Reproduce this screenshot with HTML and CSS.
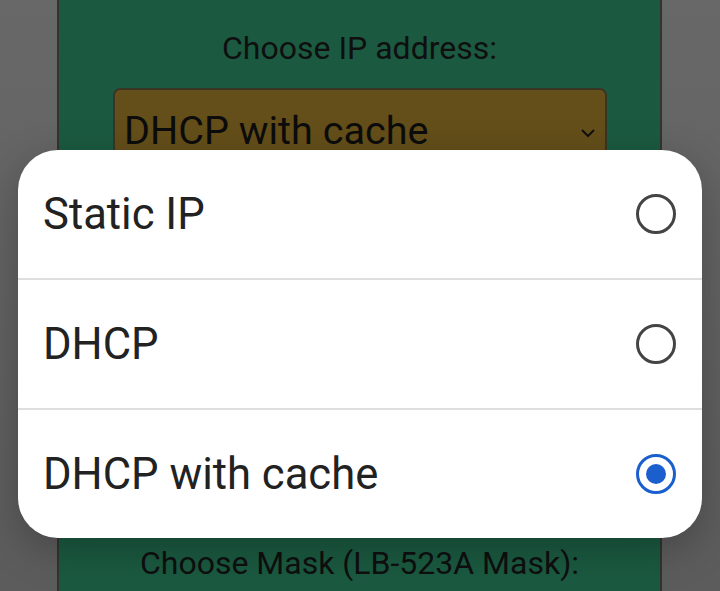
FILE: index.html
```html
<!DOCTYPE html>
<html lang="en">
<head>
    <meta charset="UTF-8">
    <meta name="viewport" content="width=device-width, initial-scale=1.0">
    <title>Network settings</title>
    <link rel="stylesheet" href="styles.css">
</head>
<body>
    <div class="panel">
        <p class="label">Choose IP address:</p>
        <div class="select">
            <span>DHCP with cache</span>
            <svg class="chevron" width="16" height="10" viewBox="0 0 16 10"><path d="M2 2l6 6 6-6" fill="none" stroke="#111" stroke-width="2"/></svg>
        </div>
        <p class="label mask-label">Choose Mask (LB-523A Mask):</p>
    </div>

    <div class="dialog">
        <div class="option">
            <span>Static IP</span>
            <span class="radio"></span>
        </div>
        <div class="option">
            <span>DHCP</span>
            <span class="radio"></span>
        </div>
        <div class="option">
            <span>DHCP with cache</span>
            <span class="radio checked"></span>
        </div>
    </div>
</body>
</html>
```

FILE: styles.css
```css
html, body {
    height: 100%;
}
body {
    font-family: Roboto, "Noto Sans", "Liberation Sans", sans-serif;
    margin: 0;
    background: linear-gradient(#686868, #5c5c5c);
    overflow: hidden;
}
.panel {
    width: 605px;
    height: 100%;
    margin: 0 auto 0 57px;
    background-color: #1b5a41;
    border-left: 2px solid #333;
    border-right: 2px solid #333;
    padding-top: 29px;
    box-sizing: border-box;
    text-align: center;
}
.label {
    margin: 0;
    font-size: 32px;
    color: #0f0f0f;
}
.select {
    margin: 21px 0 0 54px;
    width: 494px;
    height: 72px;
    box-sizing: border-box;
    background-color: #644f1a;
    border: 2px solid #3a3424;
    border-radius: 7px;
    display: flex;
    justify-content: space-between;
    padding: 17px 9px 0 9px;
    font-size: 39.6px;
    color: #0c0c0c;
    text-align: left;
}
.chevron {
    margin-top: 21px;
}
.mask-label {
    margin-top: 384px;
}
.dialog {
    position: absolute;
    left: 18px;
    top: 150px;
    width: 684px;
    background: white;
    border-radius: 40px;
    box-shadow: 0 12px 40px rgba(0,0,0,0.25);
    overflow: hidden;
}
.option {
    height: 128px;
    display: flex;
    align-items: center;
    justify-content: space-between;
    padding: 0 26px 0 25px;
    font-size: 43.6px;
    color: #222;
}
.option + .option {
    border-top: 2px solid #dedede;
}
.radio {
    width: 40px;
    height: 40px;
    box-sizing: border-box;
    border: 3.5px solid #444;
    border-radius: 50%;
    display: flex;
    align-items: center;
    justify-content: center;
}
.radio.checked {
    border-color: #1b5fcf;
}
.radio.checked::after {
    content: "";
    width: 20px;
    height: 20px;
    border-radius: 50%;
    background: #1b5fcf;
}
```
